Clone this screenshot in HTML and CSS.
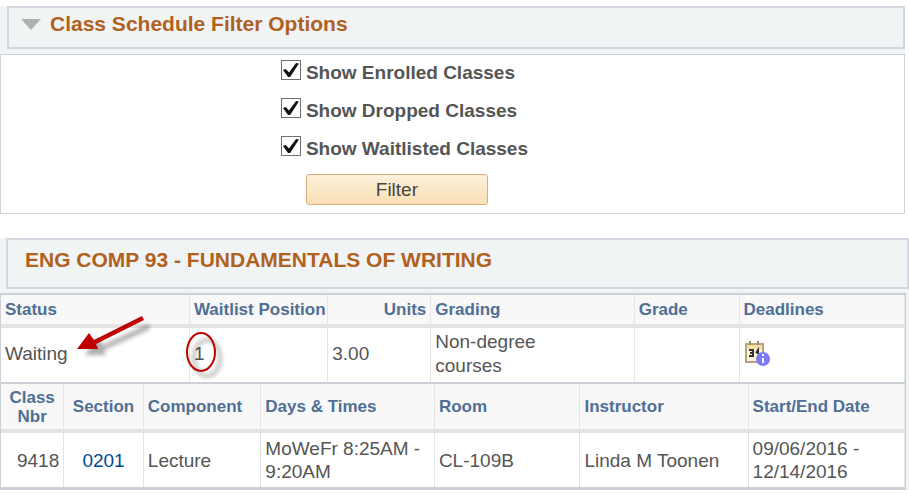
FILE: index.html
```html
<!DOCTYPE html>
<html lang="en">
<head>
<meta charset="utf-8">
<title>Class Schedule</title>
<link rel="stylesheet" href="styles.css">
</head>
<body>
<form class="filter" action="#">
  <h2 class="heading heading-filter">
    <svg class="caret" width="20" height="11" viewBox="0 0 20 11" aria-hidden="true"><path d="M0 0H20L10 11Z" fill="#b0b1b1"/></svg>
    <span>Class Schedule Filter Options</span>
  </h2>
  <div class="filter-body">
    <div class="options">
      <label class="option"><input type="checkbox" checked><span>Show Enrolled Classes</span></label>
      <label class="option"><input type="checkbox" checked><span>Show Dropped Classes</span></label>
      <label class="option"><input type="checkbox" checked><span>Show Waitlisted Classes</span></label>
      <button class="filter-button" type="button">Filter</button>
    </div>
  </div>
</form>

<section class="course">
  <h2 class="heading heading-course">ENG COMP 93 - FUNDAMENTALS OF WRITING</h2>
  <div class="grids">
    <table class="grid">
      <colgroup><col class="c-status"><col class="c-position"><col class="c-units"><col class="c-grading"><col class="c-grade"><col class="c-deadlines"></colgroup>
      <thead>
        <tr class="summary-head"><th>Status</th><th>Waitlist Position</th><th class="right">Units</th><th>Grading</th><th>Grade</th><th>Deadlines</th></tr>
      </thead>
      <tbody>
        <tr class="summary-row">
          <td class="mark-cell">Waiting
            <svg class="arrow" width="80" height="50" viewBox="0 0 80 50" aria-hidden="true">
              <path d="M66 5 21 26 15 18 3 36 24 36 22 31 68 10Z" transform="translate(7 6)" fill="#000" opacity=".32" class="soft"/>
              <path d="M67 3 19 27 14 20 2 36 23 36 21 31 69 7Z" fill="#c00000"/>
            </svg>
          </td>
          <td class="mark-cell">1
            <svg class="ring" width="44" height="54" viewBox="0 0 44 54" aria-hidden="true">
              <ellipse cx="23" cy="28" rx="13" ry="18" fill="none" stroke="#000" stroke-width="4" opacity=".24" class="soft"/>
              <ellipse cx="17" cy="22" rx="14" ry="19" fill="none" stroke="#c00000" stroke-width="2"/>
            </svg>
          </td>
          <td>3.00</td>
          <td>Non-degree<br>courses</td>
          <td></td>
          <td>
            <a class="deadline" href="#" aria-label="Academic calendar deadlines">
              <svg width="27" height="26" viewBox="0 0 27 26" aria-hidden="true">
                <path d="M1 2H20V22H1Z" fill="#b8a57d"/>
                <path d="M3 4H18V20H3Z" fill="#fff3d6"/>
                <path d="M3 4H18V8H3Z" fill="#f6dfa0"/>
                <path d="M6 0V4M14 0V4" stroke="#9d8b70" stroke-width="2"/>
                <path d="M5 9H9V15H5M6 12H9M12 12 14 9V13" fill="none" stroke="#333" stroke-width="2"/>
                <circle cx="19" cy="18" r="7" fill="#7b7bfa"/>
                <path d="M19 17V22M19 13V15" stroke="#fff" stroke-width="2"/>
              </svg>
            </a>
          </td>
        </tr>
      </tbody>
    </table>
    <table class="grid">
      <colgroup><col class="c-nbr"><col class="c-section"><col class="c-component"><col class="c-days"><col class="c-room"><col class="c-instructor"><col class="c-dates"></colgroup>
      <thead>
        <tr class="detail-head"><th class="center">Class<br>Nbr</th><th class="center">Section</th><th>Component</th><th>Days &amp; Times</th><th>Room</th><th>Instructor</th><th>Start/End Date</th></tr>
      </thead>
      <tbody>
        <tr class="detail-row"><td class="right">9418</td><td class="center"><a class="section-link" href="#">0201</a></td><td>Lecture</td><td>MoWeFr 8:25AM - 9:20AM</td><td>CL-109B</td><td>Linda M Toonen</td><td>09/06/2016 - 12/14/2016</td></tr>
      </tbody>
    </table>
  </div>
</section>
</body>
</html>
```

FILE: styles.css
```css
* { box-sizing: border-box; }
body {
  margin: 0;
  padding-top: 6px;
  background: #fff;
  color: #555;
  font: 19px/24px "Liberation Sans", Arial, sans-serif;
}
.filter {
  margin: 0 4px 24px 0;
  background: #f0f4f5;
}
.heading {
  margin: 0;
  border: 2px solid #d2d6de;
  background: #f0f4f5;
  color: #b1611e;
  font-size: 21px;
  line-height: 26px;
}
.heading-filter {
  display: flex;
  align-items: flex-start;
  gap: 9px;
  margin-left: 7px;
  height: 43px;
  padding: 3px 12px;
}
.caret { margin-top: 8px; }
.filter-body {
  display: flex;
  margin-top: 5px;
  padding: 5px 0 8px;
  border: 1px solid #ccd1da;
  background: #fff;
}
.options {
  display: flex;
  flex-direction: column;
  margin-left: 31%;
}
.option {
  display: flex;
  align-items: flex-start;
  gap: 5px;
  height: 38px;
  font-weight: bold;
}
.option span { padding-top: 1px; }
.option input {
  appearance: none;
  width: 20px;
  height: 20px;
  margin: 0;
  border: 1px solid #707070;
  background: #fff;
  display: grid;
  place-items: center;
}
.option input::before {
  content: "";
  width: 16px;
  height: 14px;
  background: #111;
  clip-path: polygon(0 50%, 18% 43%, 38% 68%, 82% 0, 100% 4%, 45% 100%, 32% 100%);
}
.filter-button {
  width: 182px;
  height: 31px;
  margin-left: 25px;
  padding: 0;
  border: 1px solid #dcae7e;
  border-radius: 3px;
  background: linear-gradient(#fdf0dc, #f9e0b3);
  color: #444;
  font: inherit;
}
.course { background: #f0f4f5; }
.heading-course {
  margin-left: 6px;
  height: 51px;
  padding: 7px 17px;
}
.grids {
  margin: 4px 3px 0 0;
  border: 1px solid #ccd1d8;
  border-top-width: 2px;
}
.grid {
  width: 100%;
  table-layout: fixed;
  border-collapse: separate;
  border-spacing: 0;
  background: #fff;
  border-bottom: 2px solid #ccd1d8;
}
.grid th {
  padding: 0 4px;
  border-right: 1px solid #e4e4e4;
  border-bottom: 4px solid #e4e4e4;
  background: #f8f8f8;
  color: #4f6f94;
  font-size: 17px;
  line-height: 19px;
  text-align: left;
  white-space: nowrap;
}
.grid td {
  height: 54px;
  padding: 0 4px;
  border-right: 1px solid #e4e4e4;
}
.grid .right { text-align: right; }
.grid .center { text-align: center; }
.summary-head { height: 33px; }
.summary-row td { padding-bottom: 3px; }
.detail-head { height: 49px; }
.detail-row { line-height: 23px; }
.c-status { width: 20.9%; }
.c-position { width: 15.3%; }
.c-units { width: 11.4%; }
.c-grading { width: 22.5%; }
.c-grade { width: 11.6%; }
.c-nbr { width: 7%; }
.c-section { width: 8.8%; }
.c-component { width: 13%; }
.c-days { width: 19.2%; }
.c-room { width: 16.1%; }
.c-instructor { width: 18.6%; }
.deadline { display: block; width: 27px; height: 26px; }
.deadline svg { display: block; }
.section-link { color: #004b91; text-decoration: none; }
.mark-cell { position: relative; }
.arrow, .ring { position: absolute; overflow: visible; }
.arrow { left: 74px; top: -15px; }
.ring { left: -6px; top: 2px; }
.soft { filter: blur(2px); }
```
